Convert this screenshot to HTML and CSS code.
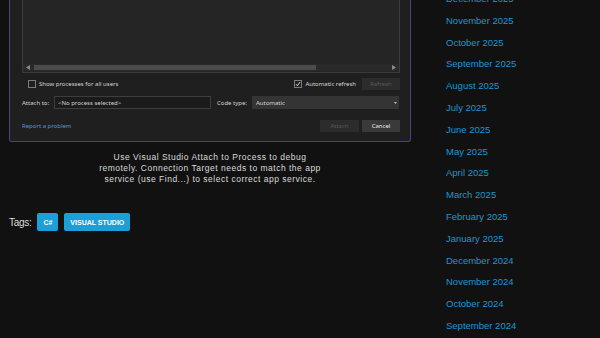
FILE: index.html
```html
<!DOCTYPE html>
<html>
<head>
<meta charset="utf-8">
<link rel="stylesheet" href="styles.css">
</head>
<body>
<div class="page">
  <main class="main">
    <figure class="shot">
      <div class="dialog">
        <div class="list">
          <div class="hscroll">
            <svg class="arr" width="4" height="5" viewBox="0 0 4 5"><polygon points="4,0 4,5 0,2.5" fill="#8a8a8a"/></svg>
            <div class="thumb"></div>
            <svg class="arr arr-r" width="4" height="5" viewBox="0 0 4 5"><polygon points="0,0 0,5 4,2.5" fill="#8a8a8a"/></svg>
          </div>
        </div>
        <div class="row row1">
          <div class="chk-group">
            <span class="chk"></span><span class="lbl">Show processes for all users</span>
          </div>
          <div class="chk-group right">
            <span class="chk checked"><svg width="6" height="6" viewBox="0 0 6 6"><polyline points="1,3.2 2.4,4.8 5,1" fill="none" stroke="#e8e8e8" stroke-width="0.9"/></svg></span><span class="lbl">Automatic refresh</span>
            <span class="btn disabled btn-refresh">Refresh</span>
          </div>
        </div>
        <div class="row row2">
          <span class="lbl lbl-attach">Attach to:</span>
          <span class="input">&lt;No process selected&gt;</span>
          <span class="lbl lbl-code">Code type:</span>
          <span class="select">Automatic<svg class="caret" width="3" height="2" viewBox="0 0 3 2"><polygon points="0,0 3,0 1.5,2" fill="#bbb"/></svg></span>
        </div>
        <div class="row row3">
          <span class="link-sm">Report a problem</span>
          <div class="btns">
            <span class="btn disabled btn-attach">Attach</span>
            <span class="btn btn-cancel">Cancel</span>
          </div>
        </div>
      </div>
      <figcaption class="caption">Use Visual Studio Attach to Process to debug<br>remotely. Connection Target needs to match the app<br>service (use Find...) to select correct app service.</figcaption>
    </figure>
    <div class="tags">
      <span class="tags-label">Tags:</span>
      <a class="tag">C#</a>
      <a class="tag">VISUAL STUDIO</a>
    </div>
  </main>
  <aside class="sidebar">
    <ul class="archive">
      <li><a>December 2025</a></li>
      <li><a>November 2025</a></li>
      <li><a>October 2025</a></li>
      <li><a>September 2025</a></li>
      <li><a>August 2025</a></li>
      <li><a>July 2025</a></li>
      <li><a>June 2025</a></li>
      <li><a>May 2025</a></li>
      <li><a>April 2025</a></li>
      <li><a>March 2025</a></li>
      <li><a>February 2025</a></li>
      <li><a>January 2025</a></li>
      <li><a>December 2024</a></li>
      <li><a>November 2024</a></li>
      <li><a>October 2024</a></li>
      <li><a>September 2024</a></li>
    </ul>
  </aside>
</div>
</body>
</html>
```

FILE: styles.css
```css
html, body {
  margin: 0;
  padding: 0;
  background: #111111;
  overflow: hidden;
}
body {
  font-family: "Liberation Sans", Arial, sans-serif;
  color: #dddddd;
}
.page {
  display: flex;
  width: 600px;
  height: 338px;
  overflow: hidden;
}
.main {
  width: 420px;
  flex: none;
}
.shot {
  margin: 0;
}
.dialog {
  margin: -20px 0 0 9px;
  width: 378px;
  padding: 8px 10px 9px 12px;
  background: #1f1f1f;
  border: 1px solid #4a4378;
  border-top: none;
  border-radius: 0 0 3px 3px;
  font-family: "Noto Sans", "Liberation Sans", sans-serif;
  font-size: 6px;
  color: #d4d4d4;
}
.list {
  height: 83px;
  border: 1px solid #3b3b3b;
  background: #252526;
  display: flex;
  flex-direction: column;
  justify-content: flex-end;
}
.hscroll {
  height: 7px;
  display: flex;
  align-items: center;
  padding: 0 3px 0 3px;
  margin-bottom: 1px;
  background: #2a2a2a;
}
.arr {
  display: block;
  flex: none;
}
.thumb {
  margin-left: 4px;
  width: 282px;
  height: 5px;
  background: #4b4b4b;
}
.arr-r {
  margin-left: auto;
}
.row {
  display: flex;
  align-items: center;
}
.row1 {
  margin-top: 5px;
  height: 12px;
  justify-content: space-between;
}
.chk-group {
  display: flex;
  align-items: center;
}
.chk-group:first-child {
  padding-left: 6px;
}
.chk {
  width: 6px;
  height: 6px;
  border: 1px solid #7c7c7c;
  margin-right: 3px;
  display: flex;
  align-items: center;
  justify-content: center;
}
.lbl {
  white-space: nowrap;
  line-height: 1;
}
.btn {
  display: flex;
  align-items: center;
  justify-content: center;
  width: 38px;
  height: 12px;
  background: #3a3a3a;
  color: #eeeeee;
  white-space: nowrap;
}
.btn.disabled {
  background: #2c2c2c;
  color: #575757;
}
.btn-refresh {
  margin-left: 6px;
}
.row2 {
  margin-top: 6px;
  height: 13px;
}
.lbl-attach {
  width: 32px;
}
.input {
  box-sizing: border-box;
  width: 157px;
  height: 13px;
  border: 1px solid #3d3d3d;
  background: #1b1b1b;
  padding-left: 3px;
  display: flex;
  align-items: center;
  white-space: nowrap;
}
.lbl-code {
  margin-left: 6px;
  width: 35px;
}
.select {
  box-sizing: border-box;
  width: 147px;
  height: 13px;
  background: #343434;
  padding: 0 2px 0 4px;
  display: flex;
  align-items: center;
  justify-content: space-between;
}
.caret {
  display: block;
}
.row3 {
  margin-top: 11px;
  height: 12px;
  justify-content: space-between;
}
.link-sm {
  color: #5c95d0;
}
.btns {
  display: flex;
  gap: 3px;
}
.btn-attach {
  width: 39px;
}
.caption {
  margin: 10px 0 0 0;
  text-align: center;
  font-size: 8.5px;
  line-height: 11px;
  letter-spacing: 0.5px;
  color: #dadada;
}
.tags {
  display: flex;
  align-items: center;
  margin: 28px 0 0 9px;
  height: 18px;
}
.tags-label {
  font-size: 10px;
  letter-spacing: -0.3px;
  color: #dddddd;
  margin-right: 6px;
}
.tag {
  display: flex;
  align-items: center;
  height: 18px;
  padding: 0 6px;
  margin-right: 6px;
  background: #1a9fd9;
  color: #ffffff;
  font-size: 7px;
  font-weight: bold;
  border-radius: 2px;
}
.sidebar {
  flex: 1;
  padding-left: 26px;
}
.archive {
  list-style: none;
  margin: -12px 0 0 0;
  padding: 0;
}
.archive li {
  height: 21.8px;
  line-height: 21.8px;
  font-size: 9.5px;
}
.archive a {
  color: #1e96d1;
}
```
